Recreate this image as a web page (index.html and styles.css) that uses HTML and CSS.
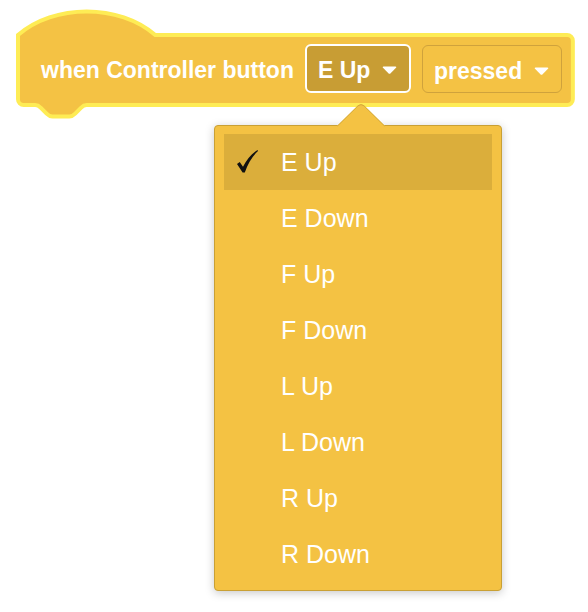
FILE: index.html
```html
<!DOCTYPE html>
<html>
<head>
<meta charset="utf-8">
<link rel="stylesheet" href="styles.css">
</head>
<body>
<div class="block">
  <svg class="block-shape" width="588" height="124" viewBox="0 0 588 124">
    <path transform="translate(18,35) scale(1.43)" vector-effect="non-scaling-stroke"
      d="M 0,0 c 25,-22 71,-22 96,0 H 384 a 4,4 0 0 1 4,4 V 45 a 4,4 0 0 1 -4,4 H 48 c -2,0 -3,1 -4,2 l -4,4 c -1,1 -2,2 -4,2 h -12 c -2,0 -3,-1 -4,-2 l -4,-4 c -1,-1 -2,-2 -4,-2 H 4 a 4,4 0 0 1 -4,-4 Z"/>
  </svg>
  <div class="row">
    <span class="label">when Controller button</span>
    <div class="dd dd-active">
      <span class="dd-text">E Up</span>
      <svg class="tri" width="15" height="8" viewBox="0 0 15 8"><path d="M1.5,0.5 H13.5 Q15,0.5 14,1.7 L8.6,7.2 Q7.5,8.2 6.4,7.2 L1,1.7 Q0,0.5 1.5,0.5 Z"/></svg>
    </div>
    <div class="dd dd-plain">
      <span class="dd-text">pressed</span>
      <svg class="tri" width="15" height="8" viewBox="0 0 15 8"><path d="M1.5,0.5 H13.5 Q15,0.5 14,1.7 L8.6,7.2 Q7.5,8.2 6.4,7.2 L1,1.7 Q0,0.5 1.5,0.5 Z"/></svg>
    </div>
  </div>
</div>
<div class="menu">
  <svg class="arrow" width="48" height="23" viewBox="0 0 48 23">
    <path class="arrow-fill" d="M0,22 L21,1.5 Q24,-1 27,1.5 L48,22 V23 H0 Z"/>
    <path class="arrow-edge" d="M0.5,22 L21,1.8 Q24,-0.6 27,1.8 L47.5,22"/>
  </svg>
  <div class="item selected">
    <svg class="check" width="21" height="23" viewBox="0 0 21 23"><path d="M0,14 L2.7,12 L6,16.8 C9.5,10 14,4 20.5,0 L21,1 C15.5,6 11,13 7.8,22.5 L5.6,22.5 Z"/></svg>
    <span class="item-text">E Up</span>
  </div>
  <div class="item"><span class="item-text">E Down</span></div>
  <div class="item"><span class="item-text">F Up</span></div>
  <div class="item"><span class="item-text">F Down</span></div>
  <div class="item"><span class="item-text">L Up</span></div>
  <div class="item"><span class="item-text">L Down</span></div>
  <div class="item"><span class="item-text">R Up</span></div>
  <div class="item"><span class="item-text">R Down</span></div>
</div>
</body>
</html>
```
FILE: styles.css
```css
html, body {
  margin: 0;
  padding: 0;
  background: #ffffff;
}
body {
  font-family: "Liberation Sans", Arial, Helvetica, sans-serif;
  width: 588px;
  height: 612px;
  overflow: hidden;
}
.block {
  position: relative;
  width: 588px;
  height: 124px;
}
.block-shape {
  position: absolute;
  left: 0;
  top: 0;
}
.block-shape path {
  fill: #F4C244;
  stroke: #FEEC55;
  stroke-width: 4;
}
.row {
  position: relative;
  display: flex;
  align-items: center;
  padding-left: 41px;
  padding-top: 44px;
  height: 49px;
}
.label {
  color: #ffffff;
  font-weight: bold;
  font-size: 23px;
  margin-right: 11px;
  padding-top: 4px;
  white-space: nowrap;
}
.dd {
  box-sizing: border-box;
  display: flex;
  align-items: center;
  border-radius: 6px;
  color: #ffffff;
  font-weight: bold;
  font-size: 23px;
  white-space: nowrap;
}
.dd-text {
  padding-top: 4px;
}
.dd-active {
  width: 106px;
  height: 49px;
  background: #C89D34;
  border: 2px solid #ffffff;
  padding-left: 11px;
  margin-right: 11px;
}
.dd-plain {
  width: 140px;
  height: 48px;
  margin-top: 1px;
  background: #F4C244;
  border: 1px solid #CFA23C;
  padding-left: 11px;
}
.tri {
  margin-left: auto;
  margin-right: 12px;
  margin-top: 3px;
}
.tri path {
  fill: #ffffff;
}
.menu {
  position: relative;
  box-sizing: border-box;
  margin-left: 214px;
  width: 288px;
  height: 466px;
  margin-top: 1px;
  background: #F4C243;
  border: 1px solid #C9A034;
  border-radius: 4px;
  box-shadow: 0 2px 10px rgba(0, 0, 0, 0.22);
  padding: 8px 9px;
}
.arrow {
  position: absolute;
  left: 122px;
  top: -22px;
}
.arrow-fill {
  fill: #F4C243;
}
.arrow-edge {
  fill: none;
  stroke: #D3A83A;
  stroke-width: 1;
}
.item {
  position: relative;
  display: flex;
  align-items: center;
  height: 56px;
  padding-left: 57px;
}
.item.selected {
  background: #DBAE3B;
}
.check {
  position: absolute;
  left: 13px;
  top: 16px;
}
.check path {
  fill: #111111;
}
.item-text {
  color: #ffffff;
  font-size: 25px;
  line-height: 56px;
}
```
